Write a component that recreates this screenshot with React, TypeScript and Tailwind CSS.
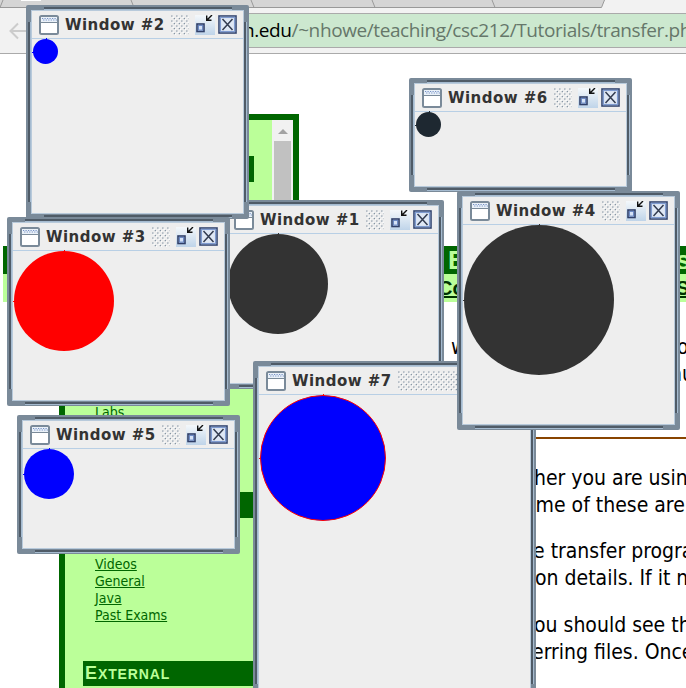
import React from 'react';

type FrameProps = {
  place: string;
  title: string;
  circle: string;
  tick: string;
};

const tahoma = "font-['DejaVu_Sans_Condensed','DejaVu_Sans',sans-serif] [font-stretch:condensed]";

function AppIcon() {
  return (
    <svg width="20" height="20" viewBox="0 0 20 20" className="block shrink-0">
      <rect x="1" y="1" width="18" height="18" rx="1.5" fill="#fff" stroke="#7a8a99" strokeWidth="2" />
      <rect x="2" y="2" width="16" height="5" fill="#eaf1f8" />
      <path d="M3 3.5H17M4.2 5H18" stroke="#7590c6" strokeDasharray="1.2 1.3" />
      <path d="M2 7.5H18" stroke="#7a8a99" />
    </svg>
  );
}

function Bumps({ id }: { id: string }) {
  return (
    <svg height="20" className="block min-w-0 flex-1">
      <defs>
        <pattern id={id} width="5" height="5" patternUnits="userSpaceOnUse">
          <rect width="1.3" height="1.3" x="0.2" y="0.4" fill="#8796a5" />
          <rect width="1.3" height="1.3" x="2.7" y="2.9" fill="#8796a5" />
          <rect width="1.2" height="1.2" x="1.5" y="1.7" fill="#fff" />
          <rect width="1.2" height="1.2" x="4" y="4.1" fill="#fff" />
        </pattern>
      </defs>
      <rect width="100%" height="20" fill={`url(#${id})`} />
    </svg>
  );
}

function IconifyButton({ id }: { id: string }) {
  return (
    <svg width="20" height="20" viewBox="0 0 20 20" className="block shrink-0">
      <defs>
        <linearGradient id={id} x1="0" y1="0" x2="0" y2="1">
          <stop offset="0" stopColor="#f4f8fb" />
          <stop offset="1" stopColor="#bfd4e9" />
        </linearGradient>
      </defs>
      <rect width="20" height="20" fill={`url(#${id})`} />
      <rect x="2" y="9" width="7" height="7.5" fill="#d5e2f6" stroke="#2f3f68" strokeWidth="1.6" />
      <rect x="3.4" y="10.4" width="4.2" height="4.7" fill="none" stroke="#6382bf" />
      <path d="M17 0L12.3 4.7M11.7 0.5V5.2H16.5" fill="none" stroke="#111" strokeWidth="1.4" />
    </svg>
  );
}

function CloseButton() {
  return (
    <svg width="19" height="19" viewBox="0 0 19 19" className="block shrink-0">
      <rect x="1" y="1" width="17" height="17" fill="#dfe8f5" stroke="#34456f" strokeWidth="1.6" />
      <rect x="2.4" y="2.4" width="14.2" height="14.2" fill="none" stroke="#7f9bd0" strokeWidth="1.3" />
      <path d="M4.5 4L14.5 15M14.5 4L4.5 15" stroke="#333c50" strokeWidth="1.5" />
    </svg>
  );
}

function Frame({ place, title, circle, tick }: FrameProps) {
  const key = title.slice(-1);
  return (
    <section className={`absolute rounded-[2px] bg-[#7a8a99] p-[5px] ${place}`}>
      <i className="absolute left-[18px] right-[17px] top-[2px] h-[2px] bg-[#4f5b67] shadow-[0_1px_0_#a5bbd0]" />
      <i className="absolute bottom-[2px] left-[18px] right-[17px] h-[2px] bg-[#4f5b67] shadow-[0_1px_0_#a5bbd0]" />
      <i className="absolute bottom-[17px] left-[2px] top-[17px] w-[2px] bg-[#4f5b67] shadow-[1px_0_0_#a5bbd0]" />
      <i className="absolute bottom-[17px] right-[3px] top-[17px] w-[2px] bg-[#4f5b67] shadow-[1px_0_0_#a5bbd0]" />
      <div className="relative h-full border border-[#b8cadb] bg-[#eee]">
        <header className="flex h-[28px] items-start border-b border-[#b8cfe5] pl-[7px] pr-[6px] pt-[4px]">
          <AppIcon />
          <span className="ml-[6px] w-[106px] shrink-0 whitespace-nowrap font-['DejaVu_Sans',sans-serif] text-[15px] font-bold leading-[20px] tracking-[0.45px] text-[#333]">
            {title}
          </span>
          <Bumps id={`bumps${key}`} />
          <span className="ml-[6px]"><IconifyButton id={`min${key}`} /></span>
          <span className="ml-[3px]"><CloseButton /></span>
        </header>
        <div className="relative ml-px w-fit">
          <div className={`rounded-full ${circle}`} />
          <i className={`absolute -left-px top-1/2 h-px w-[2px] ${tick}`} />
          <i className={`absolute -top-px left-1/2 h-[2px] w-px ${tick}`} />
        </div>
      </div>
    </section>
  );
}

function Browser() {
  return (
    <header className="h-[54px] overflow-hidden border-b border-[#aaa] bg-[#f2f2f2]">
      <svg width="686" height="8" className="block">
        <rect width="686" height="8" fill="#f2f2f2" />
        <path d="M0 0H604.5L601.5 7.5H0Z" fill="#d5d5d5" />
        <path d="M0 7.5H601.5L604.5 0M3 0L0 7.5M131 0L134 7.5M251 0L254 7.5M372 0L375 7.5M492 0L495 7.5" fill="none" stroke="#999" />
        <rect x="21" width="20" height="1" fill="#fff" />
      </svg>
      <div className="flex pt-[5px]">
        <div className="flex w-[36px] justify-center pt-[9px]">
          <svg width="18" height="18" viewBox="0 0 18 18" fill="none" stroke="#ccc" strokeWidth="2">
            <path d="M18 9H2M9 1.5L1.5 9L9 16.5" />
          </svg>
        </div>
        <div className="h-[35px] flex-1 overflow-hidden whitespace-nowrap border-y border-[#aaa] bg-[#cce8cf] pl-[207px] font-['Open_Sans','Noto_Sans',sans-serif] text-[19px] leading-[32px] tracking-[-0.4px] text-[#66776a]">
          <span className="text-black">n.edu</span>/~nhowe/teaching/csc212/Tutorials/transfer.ph
        </div>
      </div>
    </header>
  );
}

function Sidebar() {
  return (
    <aside className="absolute left-[59px] top-[114px] flex h-[590px] w-[240px] border-[6px] border-[#006600] bg-[#bbff99]">
      <nav className={`w-[207px] pl-[18px] pt-[36px] text-[14px] leading-[17px] text-[#006600] ${tahoma}`}>
        <div className="h-[26px] w-[171px] bg-[#006600]" />
        <div className="mt-[222px] pl-[12px] underline">Labs</div>
        <div className="mt-[71px] h-[26px] w-[171px] bg-[#006600]" />
        <ul className="mt-[38px] pl-[12px] underline">
          <li>Videos</li>
          <li>General</li>
          <li>Java</li>
          <li>Past Exams</li>
        </ul>
        <h2 className="mt-[37px] h-[25px] w-[171px] bg-[#006600] pl-[2px] font-['Liberation_Sans',sans-serif] text-[14px] font-bold leading-[24px] tracking-[0.9px] text-[#bbff99]">
          <span className="text-[18px]">E</span>XTERNAL
        </h2>
      </nav>
      <div className="flex flex-1 flex-col items-center bg-[#f1f1f1] pt-[9px]">
        <i className="h-0 w-0 border-x-[5px] border-b-[5px] border-x-transparent border-b-[#a3a3a3]" />
        <div className="mt-[7px] w-[17px] flex-1 bg-[#c1c1c1]" />
      </div>
    </aside>
  );
}

function Article() {
  return (
    <main className="pl-[3px] pt-[192px]">
      <div className="flex h-[28px] justify-between overflow-hidden bg-[#006600] pl-[445px] font-['Liberation_Sans',sans-serif] text-[26px] font-bold leading-[28px] text-[#bbff99]">
        <span>E</span><span className="w-[10px]">s</span>
      </div>
      <div className="flex h-[28px] justify-between overflow-hidden bg-[#bbff99] pl-[435px] font-['Liberation_Sans',sans-serif] text-[20px] font-bold leading-[28px] text-[#003300] underline">
        <span>Co</span><span className="w-[10px]">S</span>
      </div>
      <div className={`overflow-hidden whitespace-nowrap text-[21px] leading-[26.5px] text-black ${tahoma}`}>
        <div className="mt-[32px] flex justify-between pl-[448px]"><span>w</span><span className="w-[9px]">o</span></div>
        <div className="pl-[667px]">nu</div>
        <hr className="ml-[297px] mt-[50px] border-0 border-t-2 border-[#884400]" />
        <p className="mt-[26px] pl-[531px]">her you are usin</p>
        <p className="pl-[521px]">ome of these are</p>
        <p className="mt-[20px] pl-[530px]">e transfer progra</p>
        <p className="pl-[532px]">on details. If it n</p>
        <p className="mt-[21px] pl-[531px]">ou should see th</p>
        <p className="pl-[529px]">erring files. Once</p>
      </div>
    </main>
  );
}

export default function App() {
  return (
    <div className="relative h-[688px] w-[686px] overflow-hidden bg-white">
      <Browser />
      <Article />
      <Sidebar />
      <Frame title="Window #1" place="left-[221px] top-[200px] h-[189px] w-[223px]" circle="size-[100px] bg-[#333]" tick="bg-[#333]" />
      <Frame title="Window #2" place="left-[26px] top-[5px] h-[214px] w-[223px]" circle="size-[25px] bg-[#00f]" tick="bg-[#00f]" />
      <Frame title="Window #3" place="left-[7px] top-[217px] h-[189px] w-[223px]" circle="size-[100px] bg-[#f00]" tick="bg-[#f00]" />
      <Frame title="Window #5" place="left-[17px] top-[415px] h-[139px] w-[223px]" circle="size-[50px] bg-[#00f]" tick="bg-[#00f]" />
      <Frame title="Window #6" place="left-[409px] top-[78px] h-[114px] w-[223px]" circle="size-[25px] bg-[#1e2831]" tick="bg-[#1e2831]" />
      <Frame title="Window #7" place="left-[253px] top-[361px] h-[340px] w-[283px]" circle="size-[126px] border border-[#f00] bg-[#00f]" tick="bg-[#f00]" />
      <Frame title="Window #4" place="left-[457px] top-[191px] h-[239px] w-[223px]" circle="size-[150px] bg-[#333]" tick="bg-[#333]" />
    </div>
  );
}
